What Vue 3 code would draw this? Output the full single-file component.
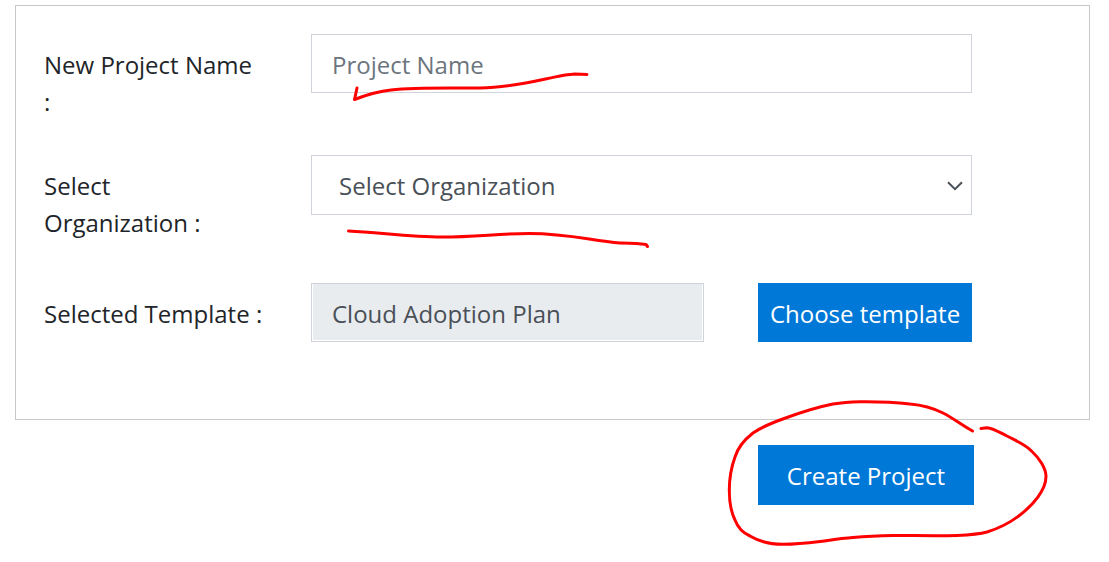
<script setup>
import { ref } from 'vue'

const projectName = ref('')
const organization = ref('')
const template = ref('Cloud Adoption Plan')
</script>

<template>
  <form class="page" @submit.prevent>
    <section class="card">
      <div class="row">
        <label class="label" for="project-name">New Project Name :</label>
        <input id="project-name" v-model="projectName" class="field wide" type="text" placeholder="Project Name" />
      </div>
      <div class="row organization">
        <label class="label" for="organization">Select Organization :</label>
        <div class="select wide">
          <select id="organization" v-model="organization" class="field">
            <option value="">Select Organization</option>
          </select>
          <svg class="chevron" width="16" height="10" viewBox="0 0 16 10" aria-hidden="true">
            <path d="M1 1.3 8 8.2 15 1.3" fill="none" stroke="#495057" stroke-width="2" />
          </svg>
        </div>
      </div>
      <div class="row">
        <label class="label single-line" for="template">Selected Template :</label>
        <input id="template" v-model="template" class="field readonly" type="text" readonly />
        <button class="button" type="button">Choose template</button>
      </div>
    </section>
    <footer class="footer">
      <button class="button create" type="submit">Create Project</button>
    </footer>

    <svg class="ink" width="1109" height="562" viewBox="0 0 1109 562" aria-hidden="true">
      <path d="M357 88 354.500 99.500C366 95 376 91.500 391 90C420 87 460 88.500 480 88C520 88 556 74.500 575 74L587 74.500" />
      <path d="M348.500 231C380 232.500 410 237 442 237C475 237 500 233.500 529 233.500C570 233.500 592 241 620 243C630 243.300 638 243.500 646 244.500L647.500 246.500" />
      <path d="M972.500 431C963 426 953 418 943 413C933 408 922 405 910 404C893 402 877 401.500 860 401.700C851 401.900 842 402.500 833 404C818 407 802 412 787 417.500C774 422 763 426 753 433C744 440 738 447 735 457C731 468 729.300 478 729.300 490C729.300 502 731 512 735 520C738 528 743 533 750 536C760 542 771 544.300 783 544.300C796 544.300 808 543 820 541.500C831 540 842 538.300 853 537.500C866 536.300 880 535.700 893 535.500C914 535.500 936 536 957 535.500C968 535 978 534.500 987 532C1000 528 1011 522 1020 515C1033 505 1046 490 1046 476.500C1046 468 1039 458 1032 451.500C1025 444 1016 441 1007 436C999 432 993 428 987 427.700L981 428.500" />
    </svg>
  </form>
</template>

<style>
body {
  margin: 0;
  background: #fff;
}
</style>

<style scoped>
.page {
  position: relative;
  padding: 5px 19px 0 15px;
  overflow: hidden;
  min-height: 100vh;
  box-sizing: border-box;
  font-family: "Segoe UI", "Open Sans", "Noto Sans", sans-serif;
  font-size: 24px;
  line-height: 37px;
  color: #212529;
}

.card {
  display: flex;
  flex-direction: column;
  gap: 35px;
  padding: 28px 117px 77px 28px;
  border: 1px solid #c8c8c8;
}

.row {
  display: grid;
  grid-template-columns: 213px minmax(0, 1fr) 214px;
  column-gap: 54px;
  align-items: start;
}

.organization {
  margin-bottom: 7px;
}

.label {
  padding-top: 12px;
}

.single-line {
  white-space: nowrap;
}

.wide {
  grid-column: 2 / 4;
}

.field {
  display: block;
  box-sizing: border-box;
  width: 100%;
  height: 59px;
  margin: 0;
  padding: 2px 20px 0;
  border: 1px solid #ced4da;
  border-radius: 0;
  background: #fff;
  color: #495057;
  font: inherit;
}

.field::placeholder {
  color: #6c757d;
  opacity: 1;
}

.select {
  position: relative;
}

.select .field {
  height: 60px;
  padding: 0 48px 0 27px;
  appearance: none;
}

.chevron {
  position: absolute;
  top: 26px;
  right: 9px;
  pointer-events: none;
}

.field.readonly {
  background: #e9ecef;
  box-shadow: inset 1px -1px #fff, inset -1px 0 #fff;
}

.button {
  height: 59px;
  padding: 2px 0 0;
  border: 0;
  background: #0078d7;
  color: #fff;
  font: inherit;
  white-space: nowrap;
}

.footer {
  display: flex;
  justify-content: flex-end;
  padding: 25px 116px 0 0;
}

.create {
  width: 216px;
  height: 60px;
  padding: 0;
}

.ink {
  position: absolute;
  top: 0;
  left: 0;
  fill: none;
  stroke: #f00;
  stroke-width: 3;
  stroke-linecap: round;
  stroke-linejoin: round;
  pointer-events: none;
}
</style>
